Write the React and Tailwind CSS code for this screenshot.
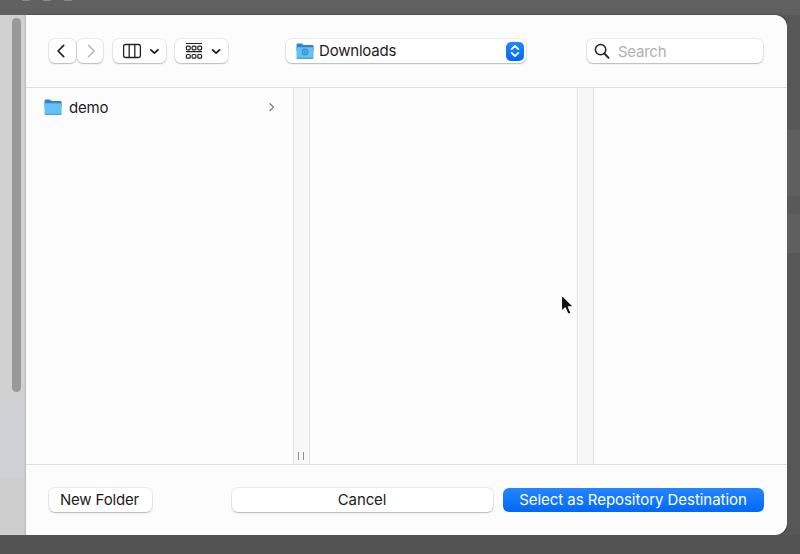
import React from "react";

const control =
  "flex h-6 items-center rounded-md bg-white shadow-[0_0_0_1px_rgba(0,0,0,0.06),0_1px_1.5px_rgba(0,0,0,0.22)]";

function Chevron({ d, color = "#222", width = 1.7, className }) {
  return (
    <svg className={className} viewBox="0 0 16 16" fill="none" stroke={color} strokeWidth={width} strokeLinecap="round" strokeLinejoin="round">
      <path d={d} />
    </svg>
  );
}

function Folder({ download }) {
  return (
    <svg className="h-[17px] w-[18px] shrink-0" viewBox="0 0 18 17">
      <path d="M.5 2Q.5.6 1.8.6H6l1.4 1.3h9Q17.6 1.9 17.6 3v5H.5z" fill="#3583c4" />
      <path d="M.5 4.2h17.1v10.4q0 1.2-1.2 1.2H1.7q-1.2 0-1.2-1.2z" fill="#62c1f5" />
      <path d="M.6 14.8h16.9q0 1.2-1.2 1.2H1.8Q.6 16 .6 14.8z" fill="#4ba3da" />
      {download && (
        <g fill="#55aee4" stroke="#3a92cb">
          <circle cx="9.1" cy="9" r="2.9" strokeWidth="1.1" />
          <path d="M9.1 7.7v2.5M8.1 9.3l1 1 1-1" strokeWidth=".8" fill="none" />
        </g>
      )}
    </svg>
  );
}

function ColumnsIcon() {
  return (
    <svg className="h-4 w-5" viewBox="0 0 20 16" fill="none" stroke="#222" strokeWidth="1.3">
      <rect x="1.6" y="1.5" width="16.8" height="13" rx="1.8" />
      <path d="M7.2 1.5v13M12.8 1.5v13" />
    </svg>
  );
}

function GroupIcon() {
  return (
    <svg className="h-[18px] w-[18px]" viewBox="0 0 18 18" fill="none" stroke="#222" strokeWidth="1.2">
      <path d="M1 1.5h16M1 9.7h16" />
      {[4.1, 12.5].map((y) =>
        [1.4, 7.1, 12.8].map((x) => <rect key={`${x}-${y}`} x={x} y={y} width="3.8" height="3.7" rx="1" />)
      )}
    </svg>
  );
}

function Toolbar() {
  return (
    <header className="flex h-[73px] shrink-0 items-center border-b border-[#dedede] pl-[23px]">
      <button className={`${control} w-[27px] justify-center pr-[3px]`}>
        <Chevron className="h-4 w-4" d="M10.7 2.3 5.1 8l5.6 5.7" width={1.7} />
      </button>
      <button className={`${control} ml-px w-[26px] justify-center pl-px`}>
        <Chevron className="h-4 w-4" d="M5.5 2.3 11.1 8l-5.6 5.7" color="#b4b4b4" width={1.4} />
      </button>
      <button className={`${control} ml-[10px] w-[53px] pl-[9px]`}>
        <ColumnsIcon />
        <Chevron className="ml-1 h-4 w-4" d="m4.9 6.9 3.5 3.2 3.5-3.2" width={1.9} />
      </button>
      <button className={`${control} ml-[9px] w-[53px] pl-[10px]`}>
        <GroupIcon />
        <Chevron className="ml-[5px] h-4 w-4" d="m4.6 6.9 3.5 3.2 3.5-3.2" width={1.9} />
      </button>
      <button className={`${control} ml-[58px] w-[240px] pl-[10px] pr-[2px]`}>
        <Folder download />
        <span className="ml-[5px] text-[15px] leading-5 tracking-[-0.2px]">Downloads</span>
        <span className="ml-auto flex h-[19px] w-[18px] items-center justify-center rounded-[5px] bg-linear-to-b from-[#2287ff] to-[#0068f8]">
          <Chevron className="h-4 w-4" d="M4.7 6.1 8 2.9l3.3 3.2M4.7 9.9 8 13.1l3.3-3.2" color="#fff" width={1.9} />
        </span>
      </button>
      <label className={`${control} ml-[61px] w-[176px] pl-[7px]`}>
        <svg className="h-4 w-4" viewBox="0 0 16 16" fill="none" stroke="#222" strokeWidth="1.5" strokeLinecap="round">
          <circle cx="6.6" cy="6.6" r="5.2" />
          <path d="m10.4 10.5 4.2 4.3" strokeWidth="1.8" />
        </svg>
        <span className="ml-2 pt-px text-[15px] leading-5 tracking-[-0.25px] text-[#b0b0b0]">Search</span>
      </label>
    </header>
  );
}

function Gutter({ handle }) {
  return (
    <div className="flex w-[17px] shrink-0 items-end justify-center gap-[4px] border-x border-[#e2e2e2] bg-[#f7f7f8] pb-1 pr-px">
      {handle && (
        <>
          <i className="h-2 w-px bg-[#929292]" />
          <i className="h-2 w-px bg-[#929292]" />
        </>
      )}
    </div>
  );
}

export default function App() {
  return (
    <div className="relative h-[554px] w-[800px] overflow-hidden bg-[#5b5b5b] font-['Inter',sans-serif] text-[15px] text-[#1c1c1c]">
      <div className="flex h-[554px] flex-col">
        <div className="flex h-[15px] shrink-0 gap-[13px] bg-[#606060] pl-[22px]">
          <i className="h-px w-2 rounded-b-full bg-[#8a8a8a]" />
          <i className="h-px w-2 rounded-b-full bg-[#8a8a8a]" />
          <i className="h-px w-2 rounded-b-full bg-[#8a8a8a]" />
        </div>
        <div className="flex h-[520px] shrink-0">
          <aside className="flex w-[25px] shrink-0 flex-col bg-[#d1d1d1]">
            <div className="flex h-[392px] shrink-0 justify-end pr-1 pt-[3px]">
              <div className="h-[374px] w-[9px] rounded-full bg-[#999]" />
            </div>
            <div className="h-[71px] shrink-0 bg-[#cfd1d6]" />
            <div className="grow bg-[#cecece]" />
          </aside>
          <main className="flex w-[762px] shrink-0 flex-col overflow-hidden rounded-r-[12px] border-l border-[#bdbdbd] bg-[#fcfcfc] shadow-[1px_0_2px_rgba(0,0,0,0.5)]">
            <Toolbar />
            <section className="flex h-[376px] shrink-0">
              <div className="flex w-[267px] shrink-0 items-start pl-[18px] pr-[13px] pt-[9px]">
                <div className="flex h-5 w-full items-center">
                  <Folder />
                  <span className="ml-[7px] pt-[2px] leading-5 tracking-[-0.2px]">demo</span>
                  <Chevron className="ml-auto h-4 w-4" d="m6 4.7 3.6 3.4L6 11.5" color="#777" width={1.2} />
                </div>
              </div>
              <Gutter handle />
              <div className="w-[267px] shrink-0" />
              <Gutter />
              <div className="grow" />
            </section>
            <footer className="flex grow items-center border-t border-[#dedede] pl-[23px]">
              <button className={`${control} w-[103px] justify-center pr-[2px] pt-px tracking-[-0.15px]`}>New Folder</button>
              <button className={`${control} ml-[80px] w-[261px] justify-center pr-px pt-px tracking-[-0.1px]`}>Cancel</button>
              <button className="ml-[10px] flex h-6 w-[261px] items-center justify-center whitespace-nowrap rounded-md bg-linear-to-b from-[#2385ff] to-[#0068fa] pr-px pt-px tracking-[-0.04px] text-white">
                Select as Repository Destination
              </button>
            </footer>
          </main>
          <div className="flex grow flex-col bg-[#575757] pt-[115px]">
            <div className="h-[66px] bg-[#5f5f5f]" />
            <div className="h-[18px] bg-[#595959]" />
            <div className="h-[39px] bg-[#5f5f5f]" />
          </div>
        </div>
        <div className="grow bg-[#535353]" />
      </div>
      <svg className="absolute left-[558px] top-[290px] h-[27px] w-[18px]" viewBox="0 0 16 24">
        <path d="M3 4v15.2l3.4-3.2 2.5 5.7 2.8-1.2-2.4-5.5h4.6z" fill="#111" stroke="#fff" strokeWidth="1.2" strokeLinejoin="round" />
      </svg>
    </div>
  );
}
